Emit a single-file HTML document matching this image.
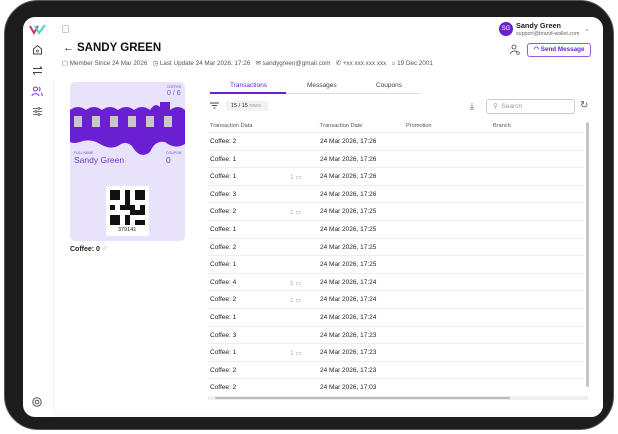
<!DOCTYPE html>
<html><head><style>
*{margin:0;padding:0;box-sizing:border-box}
body{width:618px;height:434px;background:#fff;font-family:"Liberation Sans",sans-serif;position:relative;overflow:hidden;color:#222}
.abs{position:absolute}
.frame{left:4px;top:0;width:610px;height:430px;background:#1c1c1c;border-radius:34px;border:1px solid #555}
.screen{left:23px;top:17px;width:580px;height:400px;background:#fff;border-radius:12px;overflow:hidden}
.t{position:absolute;white-space:nowrap}
.row{position:absolute;left:208px;width:376px;height:17.6px;border-bottom:1px solid #eee;font-size:6.5px;color:#222}
.row span{position:absolute;top:5px}
</style></head><body>
<div class="abs frame"></div>
<div class="abs screen">
  <!-- grey bottom strip -->
  <div class="abs" style="left:30px;top:0;width:550px;height:400px;background:#fafafa"></div>
  <div class="abs" style="left:30px;top:0;width:550px;height:392px;background:#fff"></div>
  <div class="abs" style="left:30px;top:62px;width:1px;height:330px;background:#f2f2f2"></div>
</div>
<!-- sidebar icons -->
<svg class="abs" style="left:28px;top:22px" width="20" height="14" viewBox="0 0 20 14"><path d="M2 4 L6 11 L10 4" stroke="#e0287a" stroke-width="2" fill="none"/><path d="M7 4 L11 11 L17 3" stroke="#4cd6c2" stroke-width="2" fill="none"/></svg>
<svg class="abs" style="left:32px;top:44px" width="11" height="11" viewBox="0 0 11 11"><path d="M1.5 5 L5.5 1.5 L9.5 5 V10 H1.5Z" stroke="#444" fill="none"/><circle cx="5.5" cy="7" r="1" fill="none" stroke="#444" stroke-width=".7"/></svg>
<svg class="abs" style="left:32px;top:65px" width="11" height="11" viewBox="0 0 11 11"><path d="M1 3.5H10M1 7.5H10M8 1.5L10 3.5M3 9.5L1 7.5" stroke="#444" fill="none"/></svg>
<svg class="abs" style="left:31px;top:85px" width="12" height="12" viewBox="0 0 12 12"><circle cx="4.5" cy="4" r="2" stroke="#7a2fd6" fill="none"/><path d="M1 11C1 8 8 8 8 11M8 2.2a2 2 0 010 3.6M10 8c1 .6 1.2 1.6 1.2 3" stroke="#7a2fd6" fill="none"/></svg>
<svg class="abs" style="left:32px;top:106px" width="11" height="11" viewBox="0 0 11 11"><path d="M1 2.5H10M1 5.5H10M1 8.5H10" stroke="#444" stroke-width=".8"/><circle cx="7" cy="2.5" r="1" fill="#fff" stroke="#444" stroke-width=".7"/><circle cx="4" cy="5.5" r="1" fill="#fff" stroke="#444" stroke-width=".7"/><circle cx="7" cy="8.5" r="1" fill="#fff" stroke="#444" stroke-width=".7"/></svg>
<svg class="abs" style="left:32px;top:397px" width="10" height="10" viewBox="0 0 10 10"><circle cx="5" cy="5" r="4.2" stroke="#555" fill="none"/><circle cx="5" cy="5" r="1.8" stroke="#555" fill="none"/></svg>
<div class="abs" style="left:62px;top:25px;width:7px;height:8px;border:1px solid #ccc;border-radius:1px"></div>
<!-- header -->
<div class="t" style="left:63px;top:42px;font-size:11px">←</div>
<div class="t" style="left:77px;top:42px;font-size:11.5px;font-weight:bold;color:#111">SANDY GREEN</div>
<div class="t" style="left:62px;top:60px;font-size:6.3px;color:#555;word-spacing:0">▢ Member Since 24 Mar 2026 &nbsp;&nbsp;◷ Last Update 24 Mar 2026, 17:26 &nbsp;&nbsp;✉ sandygreen@gmail.com &nbsp;&nbsp;✆ +xx xxx xxx xxx &nbsp;&nbsp;⌂ 19 Dec 2001</div>
<div class="abs" style="left:499px;top:22px;width:14px;height:14px;border-radius:50%;background:#6b1fd0;color:#fff;font-size:6px;text-align:center;line-height:14px">SG</div>
<div class="t" style="left:516px;top:21px;font-size:7.3px;font-weight:bold;color:#222">Sandy Green</div>
<div class="t" style="left:516px;top:31px;font-size:5.3px;color:#666">support@brand-wallet.com</div>
<div class="t" style="left:584px;top:25px;font-size:7px;color:#888">⌄</div>
<svg class="abs" style="left:510px;top:44px" width="10" height="11" viewBox="0 0 10 11"><circle cx="4" cy="3" r="2" stroke="#444" fill="none" stroke-width=".8"/><path d="M0.5 10C0.5 6.5 7 6.5 7 8" stroke="#444" fill="none" stroke-width=".8"/><circle cx="8" cy="9" r="1.3" stroke="#444" fill="none" stroke-width=".7"/></svg>
<div class="abs" style="left:527px;top:43px;width:64px;height:14px;border:1px solid #9a5ae0;border-radius:3px;font-size:6.3px;color:#6b1fd0;text-align:center;line-height:12px;font-weight:bold">◠ Send Message</div>
<!-- card -->
<div class="abs" style="left:70px;top:82px;width:115px;height:159px;background:#e9e2fb;border-radius:5px;overflow:hidden">
  <svg class="abs" style="left:0;top:20px" width="115" height="55" viewBox="0 0 115 55"><path d="M0 8 Q8 2 16 8 Q24 2 32 8 Q40 2 48 8 Q56 2 64 8 Q72 2 80 8 Q85 0 90 5 V0 H100 V8 Q108 2 115 8 V42 Q105 48 95 40 Q85 38 80 50 Q70 58 62 44 Q55 38 48 44 Q40 48 30 42 Q20 36 10 40 Q4 42 0 40Z" fill="#6a20d2"/>
  <g fill="#c8c8c8"><rect x="4" y="14" width="8" height="11"/><rect x="22" y="14" width="8" height="11"/><rect x="40" y="14" width="8" height="11"/><rect x="58" y="14" width="8" height="11"/><rect x="76" y="14" width="8" height="11"/><rect x="94" y="14" width="8" height="11"/></g></svg>
  <div class="t" style="left:97px;top:3px;font-size:3.5px;color:#7a4ad8">COFFEE</div>
  <div class="t" style="left:97px;top:8px;font-size:7px;color:#7a4ad8">0 / 6</div>
  <div class="t" style="left:4px;top:69px;font-size:3.5px;color:#7a4ad8">FULL NAME</div>
  <div class="t" style="left:4px;top:73px;font-size:8.5px;color:#6a3ad0">Sandy Green</div>
  <div class="t" style="left:96px;top:69px;font-size:3.5px;color:#7a4ad8">COUPON</div>
  <div class="t" style="left:96px;top:73px;font-size:8.5px;color:#6a3ad0">0</div>
  <div class="abs" style="left:36px;top:104px;width:43px;height:50px;background:#fff"></div>
  <svg class="abs" style="left:40px;top:108px" width="35" height="35" viewBox="0 0 7 7" shape-rendering="crispEdges"><g fill="#111"><rect x="0" y="0" width="2" height="2"/><rect x="5" y="0" width="2" height="2"/><rect x="0" y="5" width="2" height="2"/><rect x="3" y="0" width="1" height="3"/><rect x="2" y="3" width="3" height="1"/><rect x="4" y="4" width="2" height="1"/><rect x="3" y="5" width="1" height="2"/><rect x="5" y="6" width="2" height="1"/><rect x="6" y="3" width="1" height="2"/><rect x="0" y="3" width="1" height="1"/></g></svg>
  <div class="t" style="left:48px;top:145px;font-size:5.5px;color:#222">379141</div>
</div>
<div class="t" style="left:70px;top:245px;font-size:7px;font-weight:bold;color:#222">Coffee: 0 <span style="color:#ccc;font-weight:normal">✐</span></div>
<!-- tabs -->
<div class="t" style="left:230px;top:82px;font-size:6.5px;color:#6b1fd0">Transactions</div>
<div class="t" style="left:307px;top:82px;font-size:6.5px;color:#444">Messages</div>
<div class="t" style="left:376px;top:82px;font-size:6.5px;color:#444">Coupons</div>
<div class="abs" style="left:210px;top:93px;width:210px;height:1px;background:#ddd"></div>
<div class="abs" style="left:210px;top:92px;width:76px;height:2px;background:#6b1fd0"></div>
<!-- toolbar -->
<svg class="abs" style="left:210px;top:102px" width="9" height="7" viewBox="0 0 9 7"><path d="M0 1H9M2 3.5H7M3.5 6H5.5" stroke="#444"/></svg>
<div class="abs" style="left:226px;top:101px;width:42px;height:10px;background:#f2f2f2;border-radius:2px;font-size:5.5px;line-height:10px;padding-left:5px">15 / 15 <span style="color:#999">rows</span></div>
<div class="t" style="left:470px;top:101px;font-size:9px;color:#555">⤓</div>
<div class="abs" style="left:486px;top:99px;width:89px;height:15px;border:1px solid #ccc;border-radius:3px;font-size:6.5px;color:#999;line-height:13px;padding-left:6px">⚲ &nbsp;Search</div>
<div class="t" style="left:580px;top:100px;font-size:10px;color:#555">↻</div>
<!-- table header -->
<div class="abs" style="left:208px;top:119px;width:376px;height:14px;border-bottom:1px solid #eee;font-size:5.6px;color:#555">
  <span class="t" style="left:2px;top:4px">Transaction Data</span>
  <span class="t" style="left:110px;top:2px;color:#ddd">|</span>
  <span class="t" style="left:112px;top:4px">Transaction Date</span>
  <span class="t" style="left:196px;top:2px;color:#ddd">|</span>
  <span class="t" style="left:198px;top:4px">Promotion</span>
  <span class="t" style="left:283px;top:2px;color:#ddd">|</span>
  <span class="t" style="left:285px;top:4px">Branch</span>
</div>
<div id="rows"></div>
<div class="row" style="top:133px"><span style="left:2px">Coffee: 2</span><span style="left:112px">24 Mar 2026, 17:26</span></div>
<div class="row" style="top:150.6px"><span style="left:2px">Coffee: 1</span><span style="left:112px">24 Mar 2026, 17:26</span></div>
<div class="row" style="top:168.2px"><span style="left:2px">Coffee: 1</span><span style="left:82px;color:#aaa">1 ▭</span><span style="left:112px">24 Mar 2026, 17:26</span></div>
<div class="row" style="top:185.8px"><span style="left:2px">Coffee: 3</span><span style="left:112px">24 Mar 2026, 17:26</span></div>
<div class="row" style="top:203.4px"><span style="left:2px">Coffee: 2</span><span style="left:82px;color:#aaa">1 ▭</span><span style="left:112px">24 Mar 2026, 17:25</span></div>
<div class="row" style="top:221px"><span style="left:2px">Coffee: 1</span><span style="left:112px">24 Mar 2026, 17:25</span></div>
<div class="row" style="top:238.6px"><span style="left:2px">Coffee: 2</span><span style="left:112px">24 Mar 2026, 17:25</span></div>
<div class="row" style="top:256.2px"><span style="left:2px">Coffee: 1</span><span style="left:112px">24 Mar 2026, 17:25</span></div>
<div class="row" style="top:273.8px"><span style="left:2px">Coffee: 4</span><span style="left:82px;color:#aaa">1 ▭</span><span style="left:112px">24 Mar 2026, 17:24</span></div>
<div class="row" style="top:291.4px"><span style="left:2px">Coffee: 2</span><span style="left:82px;color:#aaa">1 ▭</span><span style="left:112px">24 Mar 2026, 17:24</span></div>
<div class="row" style="top:309px"><span style="left:2px">Coffee: 1</span><span style="left:112px">24 Mar 2026, 17:24</span></div>
<div class="row" style="top:326.6px"><span style="left:2px">Coffee: 3</span><span style="left:112px">24 Mar 2026, 17:23</span></div>
<div class="row" style="top:344.2px"><span style="left:2px">Coffee: 1</span><span style="left:82px;color:#aaa">1 ▭</span><span style="left:112px">24 Mar 2026, 17:23</span></div>
<div class="row" style="top:361.8px"><span style="left:2px">Coffee: 2</span><span style="left:112px">24 Mar 2026, 17:23</span></div>
<div class="row" style="top:379.4px;border-bottom:none"><span style="left:2px">Coffee: 2</span><span style="left:112px">24 Mar 2026, 17:03</span></div>
<!-- scrollbars -->
<div class="abs" style="left:586px;top:122px;width:3px;height:265px;background:#c8c8c8;border-radius:2px"></div>
<div class="abs" style="left:208px;top:396px;width:380px;height:4px;background:#f0f0f0"></div>
<div class="abs" style="left:215px;top:397px;width:295px;height:2px;background:#bbb;border-radius:1px"></div>
</body></html>
